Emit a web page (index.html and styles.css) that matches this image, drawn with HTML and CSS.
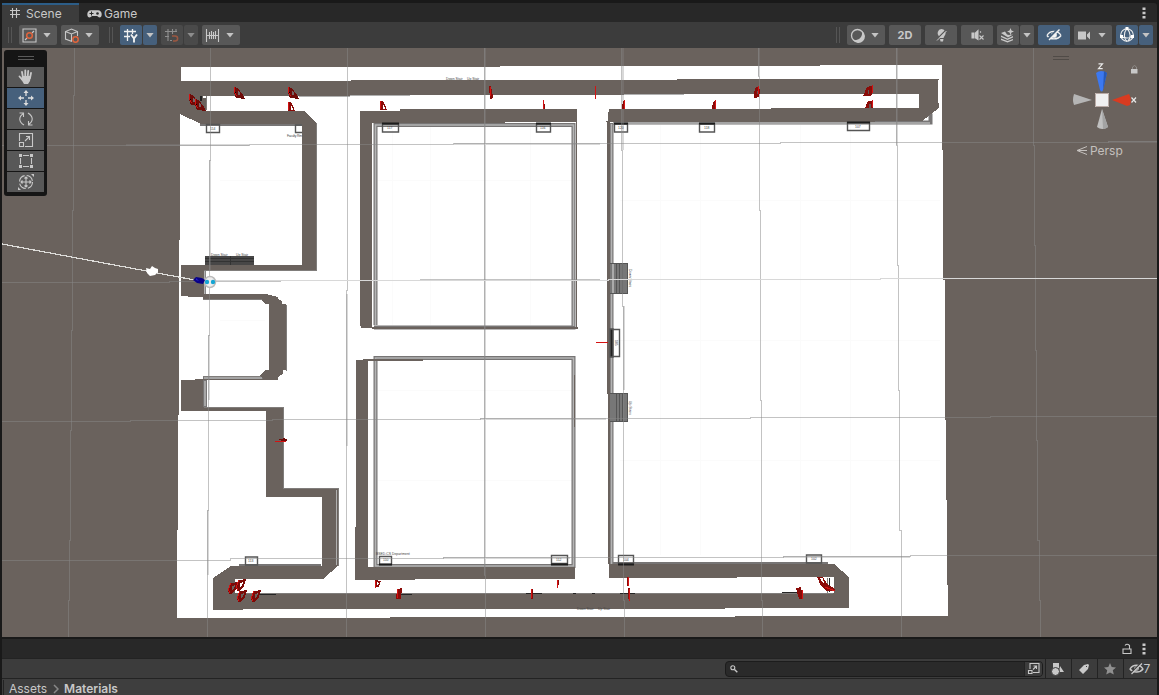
FILE: index.html
```html
<!DOCTYPE html>
<html lang="en">
<head>
<meta charset="utf-8">
<title>Scene</title>
<link rel="stylesheet" href="styles.css">
</head>
<body>
<div class="app">
  <header class="tabs">
    <div class="tab active"><svg width="12" height="12" viewBox="0 0 12 12" class="ic"><path d="M3.5 1v10M7.5 1v10M1 3.5h10M1 7.5h10"/></svg><span>Scene</span></div>
    <div class="tab"><svg width="15" height="10" viewBox="0 0 15 10"><path fill="#c8c8c8" d="M4 1.2h7a3.8 3.8 0 0 1 3.7 4c0 4-3 3.8-4.5 1.8H5C3.300 9.200.3 9 .3 5.200A3.800 3.800 0 0 1 4 1.200z"/><path stroke="#282828" d="M2.500 4.500h4M4.500 2.500v4"/><circle cx="10.500" cy="4.500" r="1.300" fill="#282828"/></svg><span>Game</span></div>
    <svg class="dots push" width="4" height="12" viewBox="0 0 4 12"><path d="M.5.5h3v2.500h-3zM.5 4.700h3v2.500h-3zM.5 9h3v2.500h-3z"/></svg>
  </header>

  <div class="toolbar">
    <div class="group">
      <i class="grip"></i>
      <div class="btn w38 first"><svg width="15" height="15" viewBox="0 0 15 15" class="ic"><path d="M1 1h13v13H1z"/><path d="M3 12l2-2M10 5l2-2"/><circle class="or" cx="7.500" cy="7.500" r="2.800"/></svg><b></b></div>
      <div class="btn w38"><svg width="15" height="15" viewBox="0 0 15 15" class="ic"><path d="M8 13.500L1.500 11V3.500L7.500 1l6 2.500V8M1.500 3.500l6 2.500 6-2.500M7.500 6v7"/><circle class="or fillbtn" cx="11.500" cy="11.500" r="2.700"/></svg><b></b></div>
    </div>
    <div class="group second">
      <i class="grip"></i>
      <div class="btn w22 on first"><svg width="15" height="15" viewBox="0 0 15 15" class="ic wh"><path stroke-width="1.300" d="M4.500 1v12M9.500 1v5M1 3.500h12M1 8.500h6"/><path stroke-width="1.900" d="M8 6.500l3 4 3-4M11 10v4.500"/></svg></div><div class="btn w14 on joined"><b></b></div>
      <div class="btn w22 off"><svg width="15" height="15" viewBox="0 0 15 15" class="ic"><path d="M4 1v12M8.500 1v5M12 1v3M1 3.500h12M1 8.500h4M6 12.500h2"/><path class="or" stroke-width="2" d="M8 8h3c3.500 0 3.500 5 0 5H9"/></svg></div><div class="btn w14 off joined"><b></b></div>
      <div class="btn w38"><svg width="15" height="15" viewBox="0 0 15 15" class="ic"><path d="M1.500 1v13M4.500 4v7M6.500 3v8M8.500 4v7M10.500 3v8M13.500 1v13M2 7.500h11"/></svg><b></b></div>
    </div>
    <div class="group push">
      <i class="grip"></i>
      <div class="btn w38 first"><svg width="15" height="15" viewBox="0 0 15 15"><circle cx="7.500" cy="7.500" r="6" fill="none" stroke="#c8c8c8" stroke-width="1.300"/><path fill="#c8c8c8" d="M12 3a6.500 6.500 0 1 1-9 9c6 1 10-3 9-9z"/></svg><b></b></div>
      <div class="btn w32 two">2D</div>
      <div class="btn w32"><svg width="15" height="15" viewBox="0 0 15 15"><path fill="#c8c8c8" d="M7.500 1a4.300 4.300 0 0 1 2.700 7.500L9.500 10h-4L5 8.500A4.300 4.300 0 0 1 7.500 1zM6 11h3.500L9 13.500H6.500z"/><path stroke="#585858" stroke-width="1.200" d="M2 12L12 2"/><path stroke="#c8c8c8" d="M3 12.500L12.500 3"/></svg></div>
      <div class="btn w32"><svg width="15" height="15" viewBox="0 0 15 15" class="ic"><path fill="#c8c8c8" d="M2 5h2v5H2zM5.500 5L8 2.500v9L5.500 10z"/><path d="M10 3.500l1 1M9.500 7.500l4 4M13.500 7.500l-4 4"/></svg></div>
      <div class="btn w22"><svg width="15" height="15" viewBox="0 0 15 15"><path fill="#c8c8c8" d="M1 5l4-1.500 2 3 2 .5 4-.5-5 3zM1 7.500l6.500 3L13 8v1.500L7.500 12 1 9zM1 10.500l6.500 2.500 5.500-2v1.200L7.500 14.500 1 12zM10.500 0l1 2.500 2.500 1-2.500 1-1 2.500-1-2.500-2.500-1 2.500-1z"/></svg></div><div class="btn w14 joined"><b></b></div>
      <div class="btn w32 on"><svg width="16" height="14" viewBox="0 0 16 14" class="ic wh"><path stroke-width="1.400" d="M1 7.500C4 2 12 2 15 7.500M1 7.500c3 4.500 11 4.500 14 0"/><circle cx="8" cy="7" r="2.300" fill="#fff"/><path stroke="#46607c" stroke-width="2" d="M2 11L12 1"/><path stroke-width="1.500" d="M3 12L13.500 1.500"/></svg></div>
      <div class="btn w38"><svg width="15" height="15" viewBox="0 0 15 15"><path fill="#c8c8c8" d="M1 3.500h8v8H1zM10 6.500l3-3v8l-3-3z"/></svg><b></b></div>
      <div class="btn w22 on"><svg width="16" height="16" viewBox="0 0 16 16" class="ic wh"><circle cx="8" cy="8" r="6.300"/><path d="M8 1.500C4 6 5 12 8 14.500M8 1.500c4 4 4 10 1 12.500M2 9.500c4 2 9 1.500 12-.5"/><path fill="#fff" stroke="none" d="M6.500 0h3v3h-3zM1 8h3v3H1zM12 8h3v3h-3z"/></svg></div><div class="btn w14 on joined"><b></b></div>
    </div>
  </div>

  <main class="viewport">
    <svg class="scene" width="1155" height="589" viewBox="2 48 1155 589">
      <defs>
        <g id="door"><path fill="#6f0b08" d="M0 0l4 1 5 7 2 4-9-1-2-5z"/><path stroke="#d51212" d="M.5 0v5l2 4"/><path fill="#766" d="M4 4l2 1v3H4z"/></g>
        <g id="half"><path fill="#8b0b08" d="M0 0h3l2 4 2 5H0z"/><path stroke="#d51212" d="M.5 0v8"/><path fill="#fff" d="M3 4h1l1 4H3z"/></g>
        <g id="ring"><path fill="#7c0b08" fill-rule="evenodd" d="M3 1l7-1-2 7-4 5H1L0 7zM4 4v4l2-1 1-4z"/><path stroke="#d51212" fill="none" d="M3 1L.5 7l1 4"/></g>
      </defs>
      <path class="floor" d="M181 67H500V66H820V65H942V150H943V280H945V420H946V500H947V585H948V616H735V617H390V618H177V530H178V415H179V240H180V114H181z"/>

      <g class="pattern"><path d="M392 125v200M430 125v200M530 125v200M660 125v430M700 125v430M800 125v430M850 125v430M220 180h80M220 320h45M378 180h195M378 390h195M378 480h195M620 200h320M620 340h320M620 460h320"/></g>

      <g class="edges">
        <path d="M200 124H302M204 270v26M203 298h60M203 378h60M205 380v28M239 566h82"/>
        <path d="M375.500 325V125H573.500V327.500H374M573.500 358H375.500V566H573.500zM611.500 123v441M613 122.500H930.500v-9M613 564H828"/>
      </g>
      <g class="edgecore"><path d="M204.500 296v-26M204 298.500h59M205 381v25M204 378h58M375.500 325V125H573.500V326M573.500 358H375.500V566H573.500zM611.500 124v440M613 123h317"/></g>

      <g class="walls">
        <path d="M180 81H351V80H677V79H939V80H938V103H939V108L922 121H875V122H610V564H608V394H607V122H606V121H608V112H609V109H771V108H919V94H624V95H350V96H203V98H206V111H304L317 123V270H204V294H266L278 297V299L282 301V304H286V370H283V374L278 377V380H203V407H284V488H338V566L323 579H235V593H500V594H650V593H834V577H737V578H609V564H834L849 577V608H725V609H243V610H213V578L231 566H322V497H266V411H181V380H195V379H263L260 375L265 370H269V304H265L260 299H203V297H188V296H181V265H302V124H201L180 114z"/>
        <path fill-rule="evenodd" d="M360 111H400V109H577V122H505V123H372V328H361V326H360zM356 527V360H368V567H575V579H415V580H355V527z"/>
        <path d="M372 327h206v2H372zM576 122h1v206h-1zM363 359h60v2h-60zM574 375h1v52h-1z"/>
      </g>
      <g class="fine">
        <path d="M316.500 123v147.500H204M203 299.500h59M286.500 305v66M203 376.500h58M204 407.500h79.500v81H338v77.500M244 593.500h589M206.500 96v14M827.500 578v15"/><path class="faint" d="M336.500 490v75M299 96.500h51M350 95.500h60M624 94.500h60"/>
      </g>

      <g class="tags">
        <path d="M206.500 124.500h13v8h-13zM302 125h-6.500v7.500h6.500M382.500 124h16v8h-16zM536.500 124h14v8h-14zM614.500 124h13v8h-13zM699.500 124h15v8h-15zM847.500 122.500h22v8h-22zM245.500 557h12v8h-12zM379.500 556.500h12v8h-12zM551.500 555.500h16v8h-16zM618.500 555.500h15v8h-15zM806.500 555h15v8h-15z"/>
        <path class="cap" d="M382 123.500h17M536 123.500h15M614 123.500h14M699 123.500h16M847 122.500h23M379 564.500h13M551 564.500h17M618 564.500h16"/>
        <path d="M610.500 329.500h9v27h-9z"/><path class="block" d="M610 329h3v28h-3z"/>
      </g>
      <g class="stairs">
        <path fill="#484747" d="M205 256h49v9H205z"/><path stroke="#333" d="M205 258.500h49M205 261.500h49M230.500 256v9"/>
        <path fill="#777" d="M610 263h18v30H610zM610 393h18v29H610z"/><path stroke="#555" fill="none" d="M610 263.500h17.500v30H610M610 393.500h17.500v28H610M616.500 264v30M619.500 264v30M622.500 264v30M616.500 394v28M619.500 394v28M622.500 394v28"/>
        <path stroke="#aaa" stroke-width="2" d="M613 264v29"/>
      </g>
      <g class="black"><path d="M258 594.500h18M400 594.500h12M526 593.500h16M573 593.500h3M592 593.500h3M620 593.500h15M782 592.500h15M829 578v14"/></g>

      <g class="micro">
        <text x="210" y="130">114</text><text x="387" y="129">117</text><text x="540" y="129">116</text><text x="618" y="129">120</text><text x="704" y="129">118</text><text x="855" y="128">107</text><text x="248" y="562">113</text><text x="383" y="561">110</text><text x="556" y="561">112</text><text x="623" y="561">104</text><text x="811" y="560">102</text>
        <text x="287" y="137" textLength="15">Faculty Rm</text><text x="376" y="555">BSED-CS Department</text><text x="446" y="80">Down Stair</text><text x="467" y="80">Up Stair</text><text x="211" y="256">Down Stair</text><text x="236" y="256">Up Stair</text><text x="577" y="610">Down Stair</text><text x="598" y="610">Up Stair</text>
        <text transform="translate(629 269) rotate(90)">Down Stairs</text><text transform="translate(629 401) rotate(90)">Up Stairs</text><text transform="translate(615 340) rotate(90)">105</text>
      </g>

      <g class="grid">
        <path d="M74.500 48V95H73.500V210H72.500V330H71.500V430H70.500V540H69.500V600H68.500V637M210.500 48V160H209.500V335H208.500V510H207.500V637M347.500 48V290H346.500V637M484.500 48V575H485.500V637M621.500 48V150H622.500V306H623.500V600H624.500V637M758.500 48V76H759.500V210H760.500V400H761.500V600H762.500V637M896.500 48V145H897.500V265H898.500V390H899.500V530H901.500V637M1033.500 48V145H1034.500V245H1035.500V350H1036.500V440H1037.500V540H1039.500V600H1040.500V637"/>
        <path d="M2 145.500H249V144.500H453V143.500H780V142.500H1108V141.500H1157M2 282.500H169V281.500H280V280.500H420V279.500H600M2 421.500H130V420.500H272V419.500H480V418.500H750V417.500H990V416.500H1157M2 560.500H230V558.500H443V557.500H783V556.500H910V555.500H1157"/>
        <path class="soft" d="M209.500 160V270M208.500 335V400M207.500 510V575M346.500 294V446M484.500 48V575M622.500 48V150M623.500 306V390M758.500 48V76M896.500 48V145M126 144.500H249M454 143.500H600M480 418.500H606M443 557.500H570M783 556.500H910M1108 141.500H1157"/>
      </g>
      <path class="beam" d="M2 244L200 281"/><path class="whiteline" d="M216 280.500H608V279.500H880V278.500H1157"/>

      <g class="doors">
        <use href="#door" x="234" y="87"/><use href="#door" x="288" y="87"/><use href="#door" x="189" y="94"/><use href="#door" x="195" y="99"/><path fill="#222" d="M200 96h2v5h-2z"/>
        <use href="#half" x="288" y="102"/><use href="#half" x="380" y="101"/>
        <path fill="#8b0b08" d="M489 86h2l2 11-1 2h-2zM712 109l1-7 3-2v9zM754 98v-5l2-6 3-1 1 5-1 6zM863 96l4-9 6-2-1 9-2 2zM865 108l3-7h5v7zM622 109l1-9 2 4-1 5zM544 104h1v5h-1z"/>
        <path stroke="#d51212" d="M490.500 87v9M595.500 86v13M543.500 100v9M624.500 100v9M715.500 100v9M758.500 86v8M872.500 85v8M872.500 100v7"/><path fill="#655" d="M757 91h1v3h-1zM868 90h1v4h-1zM869 104h2v4h-2z"/>
        <use href="#ring" x="228" y="582"/><use href="#ring" x="236" y="579"/><use href="#ring" x="237" y="590"/><use href="#ring" x="251" y="590"/>
        <path fill="#8b0b08" d="M375 580l6 1-2 6h-3zM397 589l5-1-1 11h-5zM558 580h1v5h-1zM531 589h2v10h-2zM627 577h2v9h-2zM628 588h2v11h-2zM796 588l5-1 2 12h-4zM817 577h6l4 7 8 5-1 2h-7l-6-5z"/>
        <path stroke="#d51212" d="M375.500 581v7M397.500 589v9M557.500 580v8M531.500 589v9M628.500 577v9M629.500 589v12M802 590v9M825 587l10 4M596 342.500h12M275 441h11"/><path fill="#fff" d="M820 578l2 4 2 1-1-5zM377 582l2 1-2 3z"/><path fill="#6f0b08" d="M275 440l7-1 1-1 4 1v2z"/>
      </g>
      <g class="smooth"><circle cx="210" cy="282" r="5.500" fill="#eee" stroke="#bbb" stroke-width="1.500"/><circle cx="207" cy="282" r="2.200" fill="#16a5d3"/><circle cx="213" cy="282" r="2.200" fill="#16a5d3"/><path fill="#080086" d="M193 280l3-3 6 1 3 2-2 4-6-1z"/><path fill="#2420c8" d="M196 278l3 3-3-1z"/><path fill="#fff" d="M146 268l4 1 2-3 3 2 3 1v3l-3 3-5 1-3-3z"/></g>
    </svg>

    <div class="tools">
      <i class="handle"></i>
      <div class="tool"><svg width="16" height="16" viewBox="0 0 16 16"><path fill="none" stroke="#c8c8c8" stroke-width="1.800" stroke-linecap="round" d="M5 8.500L4 3M7.300 8V1.500M9.700 8l.5-6M12 9l1-5M4.500 11L1.500 7.500"/><path fill="#c8c8c8" d="M4 7h9l-1 5-2 3H6l-3-5z"/></svg></div>
      <div class="tool on"><svg width="16" height="16" viewBox="0 0 16 16"><path stroke="#ddd" stroke-width="1.300" d="M8 2v4M8 10v4M2 8h4M10 8h4"/><path fill="#ddd" d="M5.500 3L8 0l2.500 3zM5.500 13L8 16l2.500-3zM3 5.500L0 8l3 2.500zM13 5.500L16 8l-3 2.500z"/></svg></div>
      <div class="tool"><svg width="16" height="16" viewBox="0 0 16 16" class="ic"><path d="M6 14C1 11 0 6 5.500 2.500M1.500 2h4v4M10 2c5 3 6 8 .5 11.500M14.500 14h-4v-4"/></svg></div>
      <div class="tool"><svg width="16" height="16" viewBox="0 0 16 16" class="ic"><path d="M1.500 9V1.500h13v13H7M1.500 10.500h4v4h-4zM7 9l4.500-4.500M8 4.500h3.500V8"/></svg></div>
      <div class="tool"><svg width="16" height="16" viewBox="0 0 16 16" class="ic"><path d="M5 2.500h6M5 13.500h6M2.500 5v6M13.500 5v6"/><path fill="#c8c8c8" stroke="none" d="M1 1h3v3H1zM12 1h3v3h-3zM1 12h3v3H1zM12 12h3v3h-3z"/></svg></div>
      <div class="tool"><svg width="16" height="16" viewBox="0 0 16 16" class="ic"><circle cx="8" cy="8" r="6.500" stroke-dasharray="8 2.200"/><path d="M8 3v10M3 8h10M6.500 4.500L8 3l1.500 1.500M6.500 11.500L8 13l1.500-1.500M4.500 6.500L3 8l1.500 1.500M11.500 6.500L13 8l-1.500 1.500"/><path fill="#c8c8c8" stroke="none" d="M13 0h3v3zM0 13v3h3z"/></svg></div>
    </div>

    <div class="gizmo">
      <svg width="100" height="112" viewBox="1050 50 100 112">
        <path stroke="#504b47" d="M1053 56.500h16M1053 59.500h16"/>
        <path fill="#3c78f0" d="M1096 73q5-4 11 0l-4 17q-1 3-3 0z"/><path fill="#2859b5" d="M1104 71l3 2-4 17z"/>
        <path fill="#d83b21" d="M1112 100l17-6q3 5 1 11l-3 1z"/><path fill="#b5b5b5" d="M1092 100l-18-6q-2 6 0 11z"/><path fill="#c0c0c0" d="M1102 109l6 18q-6 4-11 0z"/><path fill="#a3a3a3" d="M1102 109l6 18q-2 2-5 2z"/>
        <path fill="#f0f0f0" d="M1095 93h14v14h-14z"/><path fill="none" stroke="#b9aaa5" d="M1095.500 93.500h13v13h-13z"/>
        <path fill="none" stroke="#e8e8e8" stroke-width="1.200" d="M1098.500 63.800h4l-4 4.800h4.200M1131.500 97.500l4.500 5M1136 97.500l-4.500 5"/>
        <path fill="#c8c8c8" d="M1131 69h6.500v4.500h-6.500z"/><path fill="none" stroke="#8f8b88" d="M1132.500 69v-2q2-3 4 0v2"/>
        <path fill="none" stroke="#c4c0bd" d="M1087 146.500l-10 4 10 4M1077 150.500h10"/>
      </svg><span class="persp">Persp</span>
    </div>
  </main>

  <div class="project-tabs"><svg class="push ic" width="10" height="12" viewBox="0 0 10 12"><path d="M1 6h8v4.500H1zM3 2.500q2-2.500 4.500 0V6"/></svg><svg class="dots" width="4" height="12" viewBox="0 0 4 12"><path d="M.5.500h3v2.500h-3zM.5 4.700h3v2.500h-3zM.5 9h3v2.500h-3z"/></svg></div>
  <div class="project-bar">
    <div class="search"><svg class="ic" width="8" height="8" viewBox="0 0 8 8"><circle cx="2.800" cy="2.800" r="2"/><path stroke-width="1.400" d="M4.500 4.500L7.300 7.300"/></svg><div class="open"><svg class="ic" width="13" height="13" viewBox="0 0 13 13"><path d="M3 7V1.500h9v9H6M1.500 8.500h3.500v3H1.500zM6 7.500l3.500-3.500M6.500 4h3v3"/></svg></div></div>
    <div class="cell"><svg width="13" height="14" viewBox="0 0 13 14"><path fill="#c8c8c8" d="M2 1h6v5H2zM9 4l4 6H8z"/><circle cx="4.500" cy="9.500" r="4" fill="#c8c8c8" stroke="#3c3c3c"/></svg></div>
    <div class="cell"><svg width="12" height="12" viewBox="0 0 12 12"><path fill="#c8c8c8" fill-rule="evenodd" d="M1 7l5-5 4-1 1 1-1 4-5 5zM8 3v1h1V3z"/></svg></div>
    <div class="cell"><svg width="12" height="12" viewBox="0 0 12 12"><path fill="#909090" d="M6 0l1.700 4 4.300.4L8.800 7.300l1 4.300L6 9.400l-3.800 2.200 1-4.300L0 4.400 4.300 4z"/></svg></div>
    <div class="cell wide"><svg class="ic" width="15" height="13" viewBox="0 0 15 13"><path stroke-width="1.300" d="M1 7c3-5 10-5 13 0-3 4-10 4-13 0z"/><circle cx="7.500" cy="6.500" r="1.800"/><path stroke="#3c3c3c" stroke-width="1.500" d="M2 11L12 1"/><path stroke-width="1.300" d="M2.500 12L13 1.500"/></svg><span>7</span></div>
  </div>
  <footer class="crumbs"><i class="scrolltip"></i><span>Assets</span><svg width="6" height="10" viewBox="0 0 6 10"><path fill="none" stroke="#888" stroke-width="1.500" d="M1 1l4 4-4 4"/></svg><strong>Materials</strong></footer>
</div>
</body>
</html>
```
FILE: styles.css
```css
* { box-sizing: border-box; }
body { margin: 0; background: #191919; color: #c8c8c8; font: 12px Inter, Roboto, sans-serif; overflow: hidden; }
svg { display: block; flex: none; }
.app { width: 1159px; height: 695px; display: flex; flex-direction: column; padding-top: 3px; }
.app > * { flex: none; }
.push { margin-left: auto; }
.ic { fill: none; stroke: #c8c8c8; stroke-width: 1.1; }
.wh { stroke: #f0f0f0; }
.or { stroke: #e0643c; stroke-width: 1.5; }
.fillbtn { fill: #585858; }
.dots { fill: #c8c8c8; }

.tabs { height: 19px; margin: 0 2px; background: #282828; display: flex; align-items: center; padding-right: 11px; border-radius: 3px 3px 0 0; }
.tab { height: 19px; display: flex; align-items: center; gap: 2px; padding: 2px 8px 0; font-size: 12px; }
.tab.active { width: 77px; background: #3c3c3c; border-top: 2px solid #2c5d87; padding: 0 7px; gap: 5px; }
.tab.active svg { margin-top: -2px; }

.toolbar { height: 26px; margin: 0 2px; padding: 0 4px 0 6px; background: #3c3c3c; display: flex; align-items: center; }
.group { display: flex; align-items: center; gap: 4px; }
.group.second { margin-left: 10px; }
.grip { width: 4px; height: 16px; border: solid #555; border-width: 0 1px; }
.btn { height: 20px; display: flex; align-items: center; justify-content: center; background: #585858; border-radius: 2px; flex: none; }
.first { margin-left: 3px; }
.w38 { width: 38px; gap: 6px; padding-right: 3px; }
.w32 { width: 32px; }
.w22 { width: 22px; padding-right: 1px; }
.w14 { width: 14px; }
.btn.joined { margin-left: -3px; }
.btn.on { background: #46607c; }
.btn.off { background: #4a4a4a; }
.off svg, .off b { opacity: .55; }
.btn b { width: 8px; height: 5px; background: #c4c4c4; clip-path: polygon(0 0, 100% 0, 50% 100%); }
.two { font-size: 11px; font-weight: 700; }

.viewport { position: relative; height: 589px; margin: 0 2px; background: #6a625d; }
.scene { shape-rendering: crispEdges; }
.floor { fill: #fff; }
.walls { fill: #6a625d; }
.pattern { fill: none; stroke: #fbfbfb; }
.edges { fill: none; stroke: #777575; stroke-width: 4; shape-rendering: geometricPrecision; }
.edgecore { fill: none; stroke: #b4b4b4; stroke-width: 1.6; shape-rendering: geometricPrecision; }
.fine { fill: none; stroke: #807d7b; }
.fine .faint { stroke: #b0b0b0; }
.tags { fill: none; stroke: #555; shape-rendering: geometricPrecision; stroke-width: 1.4; }
.tags .cap { stroke: #1d1d1d; stroke-width: 2; }
.tags .block { fill: #222; }
.black { stroke: #252525; }
.grid { fill: none; stroke: rgba(136, 136, 136, .5); }
.grid .soft { stroke-width: 2; stroke: rgba(136, 136, 136, .32); }
.beam { stroke: #deddda; fill: none; stroke-width: 1.2; }
.whiteline { stroke: #d8d8d8; fill: none; }
.smooth { shape-rendering: geometricPrecision; }
.micro { fill: #444; font: 3.4px "Liberation Sans", sans-serif; }

.tools { position: absolute; left: 2px; top: 2px; width: 43px; height: 146px; padding: 6px 3px 4px; background: #151515; border-radius: 3px; display: flex; flex-direction: column; gap: 1px; }
.handle { width: 16px; height: 4px; margin: 0 auto 6px; border: solid #5a5a5a; border-width: 1px 0; flex: none; }
.tool { height: 20px; background: #585858; display: flex; align-items: center; justify-content: center; }
.tool.on { background: #46607c; }
.gizmo { position: absolute; left: 1048px; top: 2px; width: 100px; height: 112px; }
.persp { position: absolute; left: 40px; top: 93px; font-size: 12px; line-height: 15px; color: #c4c0bd; }

.project-tabs { height: 19px; margin: 2px 2px 0; background: #282828; display: flex; align-items: center; gap: 10px; padding-right: 11px; }
.project-bar { height: 21px; margin: 0 2px; background: #3c3c3c; border: solid #232323; border-width: 1px 0; display: flex; align-items: center; justify-content: flex-end; }
.search { width: 318px; height: 16px; margin-right: 2px; padding-left: 4px; background: #2a2a2a; border: 1px solid #1c1c1c; border-radius: 4px; display: flex; align-items: center; justify-content: space-between; }
.open { width: 18px; height: 14px; padding-right: 1px; background: #3c3c3c; border-left: 1px solid #232323; border-radius: 0 3px 3px 0; display: flex; align-items: center; justify-content: center; }
.cell { width: 26px; height: 19px; padding-right: 2px; border-left: 1px solid #232323; display: flex; align-items: center; justify-content: center; }
.cell.wide { width: 34px; font-size: 12px; }
.crumbs { height: 16px; margin: 0 2px; background: #3e3e3e; display: flex; align-items: center; gap: 6px; padding-top: 4px; overflow: hidden; }
.crumbs span, .crumbs strong { line-height: 14px; }
.crumbs strong { margin-left: -1px; font-weight: 600; }
.scrolltip { width: 2px; height: 18px; margin-right: -1px; border-right: 1px solid #232323; }
```
